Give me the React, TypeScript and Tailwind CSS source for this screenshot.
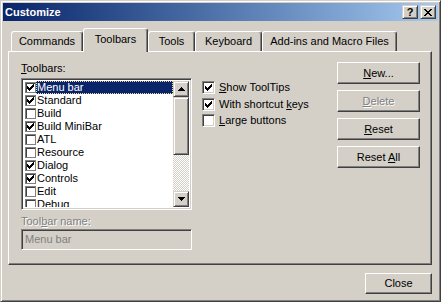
import type { ReactNode } from "react";

const raised =
  "border border-t-white border-l-white border-r-[#404040] border-b-[#404040] shadow-[inset_-1px_-1px_#808080]";
const raisedSmall =
  "border border-t-[#d4d0c8] border-l-[#d4d0c8] border-r-[#404040] border-b-[#404040] shadow-[inset_1px_1px_#fff,inset_-1px_-1px_#808080]";
const sunken =
  "border border-t-[#808080] border-l-[#808080] border-r-white border-b-white shadow-[inset_1px_1px_#404040,inset_-1px_-1px_#d4d0c8]";

function CheckMark() {
  return (
    <svg width="7" height="7" viewBox="0 0 7 7" shapeRendering="crispEdges">
      <path
        fill="#000"
        d="M6 0h1v1h-1z M5 1h2v1h-2z M0 2h1v1h-1z M4 2h3v1h-3z M0 3h2v1h-2z M3 3h3v1h-3z M0 4h5v1h-5z M1 5h3v1h-3z M2 6h1v1h-1z"
      />
    </svg>
  );
}

function Arrow({ up }: { up?: boolean }) {
  return (
    <svg width="7" height="4" viewBox="0 0 7 4" shapeRendering="crispEdges">
      <path
        fill="#000"
        d={
          up
            ? "M3 0h1v1h-1z M2 1h3v1h-3z M1 2h5v1h-5z M0 3h7v1h-7z"
            : "M0 0h7v1h-7z M1 1h5v1h-5z M2 2h3v1h-3z M3 3h1v1h-1z"
        }
      />
    </svg>
  );
}

const toolbars = [
  { name: "Menu bar", on: true },
  { name: "Standard", on: true },
  { name: "Build", on: false },
  { name: "Build MiniBar", on: true },
  { name: "ATL", on: false },
  { name: "Resource", on: false },
  { name: "Dialog", on: true },
  { name: "Controls", on: true },
  { name: "Edit", on: false },
  { name: "Debug", on: false },
];

const tabs = [
  { label: "Commands", w: "w-[72px]" },
  { label: "Toolbars", w: "w-[65px]", active: true },
  { label: "Tools", w: "w-[47px]" },
  { label: "Keyboard", w: "w-[67px]" },
  { label: "Add-ins and Macro Files", w: "w-[135px]" },
];

function Option({ checked, children, top }: { checked?: boolean; children: ReactNode; top: string }) {
  return (
    <div className={`flex items-center h-[13px] ${top}`}>
      <div className={`w-[13px] h-[13px] bg-white flex items-center justify-center ${sunken}`}>
        {checked && <CheckMark />}
      </div>
      <span className="ml-[4px]">{children}</span>
    </div>
  );
}

function Button({ children, disabled, top }: { children: ReactNode; disabled?: boolean; top?: string }) {
  return (
    <div
      className={`w-[83px] h-[22px] flex items-center justify-center ${raised} ${top ?? ""} ${
        disabled ? "text-[#808080] [text-shadow:1px_1px_0_#fff]" : ""
      }`}
    >
      <span>{children}</span>
    </div>
  );
}

export default function App() {
  return (
    <div className="w-[441px] h-[302px] bg-[#d4d0c8] text-[11px] leading-[13px] text-black [font-family:'Liberation_Sans',Arial,sans-serif] border border-t-[#d4d0c8] border-l-[#d4d0c8] border-r-[#404040] border-b-[#404040] shadow-[inset_1px_1px_#fff,inset_-1px_-1px_#808080] p-[2px] flex flex-col">
      {/* title bar */}
      <div className="h-[18px] bg-gradient-to-r from-[#0a246a] to-[#a6caf0] flex items-center pl-[2px] pr-[2px]">
        <span className="text-white font-bold">Customize</span>
        <div className="ml-auto flex gap-[2px]">
          <div className={`w-[16px] h-[14px] bg-[#d4d0c8] flex items-center justify-center font-bold ${raisedSmall}`}>
            ?
          </div>
          <div className={`w-[16px] h-[14px] bg-[#d4d0c8] flex items-center justify-center ${raisedSmall}`}>
            <svg width="8" height="7" viewBox="0 0 8 7" shapeRendering="crispEdges">
              <path
                fill="#000"
                d="M0 0h2v1h-2z M6 0h2v1h-2z M1 1h2v1h-2z M5 1h2v1h-2z M2 2h4v1h-4z M3 3h2v1h-2z M2 4h4v1h-4z M1 5h2v1h-2z M5 5h2v1h-2z M0 6h2v1h-2z M6 6h2v1h-2z"
              />
            </svg>
          </div>
        </div>
      </div>

      {/* tabs */}
      <div className="mt-[7px] ml-[8px] h-[23px] flex items-end relative z-10">
        {tabs.map((t) => (
          <div
            key={t.label}
            className={`${t.w} flex items-center justify-center bg-[#d4d0c8] rounded-t-[3px] border-t border-l border-r border-t-white border-l-white border-r-[#404040] shadow-[inset_-1px_0_#808080] ${
              t.active ? "h-[24px] -mb-[1px] pb-[2px]" : "h-[20px]"
            }`}
          >
            {t.label}
          </div>
        ))}
      </div>

      {/* panel */}
      <div className="ml-[5px] mr-[6px] h-[214px] border border-t-white border-l-white border-r-[#404040] border-b-[#404040] shadow-[inset_-1px_-1px_#808080] pt-[10px] pl-[12px] pr-[11px] flex">
        <div className="w-[171px] flex flex-col">
          <div className="h-[13px]">
            <span className="underline">T</span>oolbars:
          </div>
          <div className={`mt-[3px] h-[132px] p-[2px] flex bg-white ${sunken}`}>
            <div className="flex-1 overflow-hidden">
              {toolbars.map((t, i) => (
                <div key={t.name} className="h-[13px] flex items-center pl-[1px]">
                  <div className="w-[11px] h-[11px] border border-[#808080] shadow-[inset_1px_1px_#404040] bg-white flex items-center justify-center">
                    {t.on && <CheckMark />}
                  </div>
                  {i === 0 ? (
                    <div className="flex-1 h-[13px] bg-[#0a246a] text-white border border-dotted border-[#f5db95] flex items-center">
                      {t.name}
                    </div>
                  ) : (
                    <div className="flex-1 pl-[1px]">{t.name}</div>
                  )}
                </div>
              ))}
            </div>
            <div className="w-[16px] flex flex-col">
              <div className={`h-[16px] bg-[#d4d0c8] flex items-center justify-center ${raisedSmall}`}>
                <Arrow up />
              </div>
              <div className={`h-[58px] bg-[#d4d0c8] ${raisedSmall}`} />
              <div className="flex-1 bg-[repeating-conic-gradient(#d4d0c8_0_25%,#fff_0_50%)] bg-[length:2px_2px]" />
              <div className={`h-[16px] bg-[#d4d0c8] flex items-center justify-center ${raisedSmall}`}>
                <Arrow />
              </div>
            </div>
          </div>
          <div className="mt-[5px] h-[13px] text-[#808080] [text-shadow:1px_1px_0_#fff]">
            Tool<span className="underline">b</span>ar name:
          </div>
          <div className={`mt-[1px] h-[21px] flex items-center pl-[3px] text-[#808080] ${sunken}`}>
            Menu bar
          </div>
        </div>

        <div className="ml-[10px] pt-[19px] flex flex-col">
          <Option checked top="">
            <span className="underline">S</span>how ToolTips
          </Option>
          <Option checked top="mt-[4px]">
            With shortcut <span className="underline">k</span>eys
          </Option>
          <Option top="mt-[3px]">
            <span className="underline">L</span>arge buttons
          </Option>
        </div>

        <div className="ml-auto flex flex-col">
          <Button>
            <span className="underline">N</span>ew...
          </Button>
          <Button disabled top="mt-[6px]">
            <span className="underline">D</span>elete
          </Button>
          <Button top="mt-[6px]">
            <span className="underline">R</span>eset
          </Button>
          <Button top="mt-[6px]">
            Reset <span className="underline">A</span>ll
          </Button>
        </div>
      </div>

      <div className="mt-[8px] mr-[6px] flex justify-end">
        <div className={`w-[67px] h-[21px] flex items-center justify-center ${raised}`}>Close</div>
      </div>
    </div>
  );
}
